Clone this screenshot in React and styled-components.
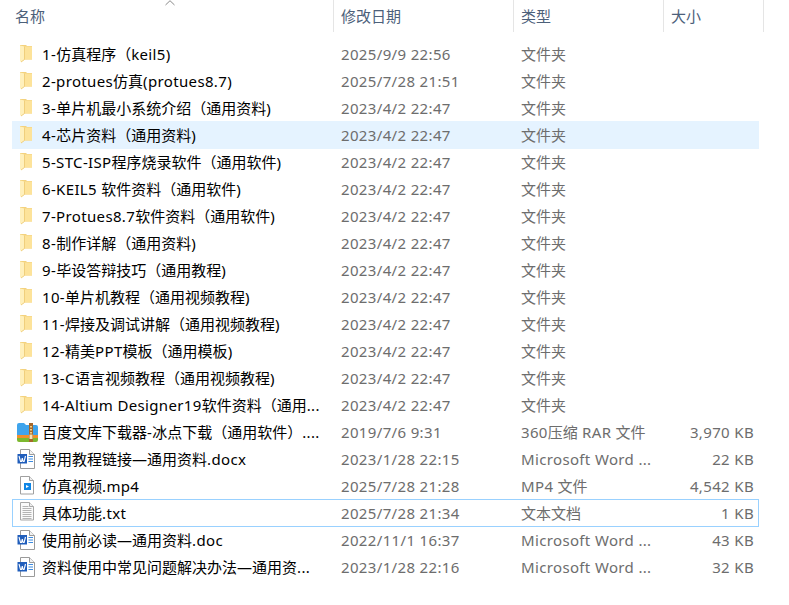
import React from 'react';
import styled, { createGlobalStyle } from 'styled-components';

const GlobalStyle = createGlobalStyle`
  html, body {
    margin: 0;
    background: #fff;
  }
`;

const Page = styled.div`
  width: 789px;
  height: 605px;
  overflow: hidden;
  font: 15px/20px 'Noto Sans', 'Noto Sans CJK SC', sans-serif;
`;

const Columns = styled.div`
  display: grid;
  grid-template-columns: 334px 180px 150px 100px;
`;

const Header = styled(Columns)`
  height: 32px;
  margin-bottom: 8px;
`;

const HeaderCell = styled.div`
  position: relative;
  padding: 6px 0 0 7px;
  color: #4c607a;
  border-right: 1px solid #e5e5e5;

  &:first-child {
    padding-left: 15px;
  }
`;

const SortArrow = styled.svg`
  position: absolute;
  top: 0;
  left: 165px;
`;

const Row = styled(Columns)`
  box-sizing: border-box;
  width: 747px;
  height: 28px;
  margin: 0 0 -1px 12px;
  grid-template-columns: 322px 180px 150px 93px;
  align-items: center;
  border: 1px solid ${(p) => (p.$focus ? '#99d1ff' : 'transparent')};
  background: ${(p) => (p.$hover ? '#e5f3ff' : 'transparent')};
`;

const NameCell = styled.div`
  display: flex;
  align-items: center;
  gap: 6px;
  padding-left: 3px;
  color: #000;
  white-space: nowrap;
`;

const IconBox = styled.span`
  display: flex;
  flex: none;
  width: 20px;
  height: 20px;

  svg {
    overflow: visible;
  }
`;

const DataCell = styled.div`
  padding-left: 6px;
  color: #6d6d6d;
  white-space: nowrap;
  text-align: ${(p) => (p.$right ? 'right' : 'left')};
  padding-right: ${(p) => (p.$right ? '4px' : '0')};
`;

const Latin = styled.span`
  letter-spacing: 0.35px;
`;

// the reference font sets latin wider than Noto Sans, CJK stays at 15px
const Label = ({ text }) =>
  text.split(/([\x20-\x7e]+)/).map((part, i) =>
    i % 2 ? <Latin key={i}>{part}</Latin> : part,
  );

const FolderIcon = () => (
  <svg width="20" height="20" viewBox="0 0 20 20">
    <path d="M4 1h6l1 1h5v13.500H4z" fill="#f3d27e" />
    <path d="M8.500 2.500h7.500v13H8.500z" fill="#fde39a" />
    <path d="M4 1.500l4.500 1v13L5 18l-1-1z" fill="#fff0bc" />
    <path d="M8.500 2.500v13L5 18" fill="none" stroke="#f0cf7c" />
  </svg>
);

const RarIcon = () => (
  <svg width="22" height="22" viewBox="0 0 22 22">
    <path d="M1 3a2 2 0 0 1 2-2h5l2 2h10a2 2 0 0 1 2 2v9H1z" fill="#3fa4ec" />
    <path d="M1 14h21v4a2 2 0 0 1-2 2H3a2 2 0 0 1-2-2z" fill="#7cb82f" />
    <path d="M1 13h21v3H1z" fill="#f0902a" />
    <path d="M13 1h4v19h-4z" fill="#a5682a" />
    <path d="M14 4h2v1.500h-2zM14 7h2v1.500h-2zM14 10h2v1.500h-2z" fill="#f2cf8a" />
    <path d="M13.500 12.500h3v4.500h-3z" fill="#f7e3b5" />
  </svg>
);

const WordIcon = () => (
  <svg width="20" height="20" viewBox="0 0 20 20">
    <path d="M4.500.5h9l5 5v14h-14z" fill="#fff" stroke="#9a9a9a" />
    <path d="M13.500.5v5h5" fill="#f2f2f2" stroke="#9a9a9a" />
    <path d="M1.500 5H11v9.500H1.500z" fill="#1f5dbb" />
    <path d="M3 7l1.500 5.500h1L6.300 9l.8 3.500h1L9.500 7" fill="none" stroke="#fff" strokeWidth="1.100" />
    <path d="M12.500 7.500H17M12.500 10H17M12.500 12.500H17" stroke="#3d8be0" strokeWidth="1.200" />
  </svg>
);

const VideoIcon = () => (
  <svg width="20" height="20" viewBox="0 0 20 20">
    <path d="M4.500.5h9l4 4v13.500h-13z" fill="#fff" stroke="#a0a0a0" />
    <path d="M13.500.5v4h4" fill="#eee" stroke="#a0a0a0" />
    <path d="M8 7h7v7H8z" fill="#0f86e6" />
    <path d="M10 9l3 1.500-3 1.500z" fill="#fff" />
  </svg>
);

const TextIcon = () => (
  <svg width="20" height="20" viewBox="0 0 20 20">
    <path d="M4.500-.5h9l4 4v13.500h-13z" fill="#fafafa" stroke="#a8a8a8" />
    <path d="M13.500-.5v4h4" fill="#eee" stroke="#a8a8a8" />
    <path d="M6.500 3.500h6M6.500 5.500h9M6.500 7.500h9M6.500 9.500h9M6.500 11.500h9M6.500 13.500h9M6.500 15.500h9" stroke="#b4b4b4" />
  </svg>
);

const icons = { folder: FolderIcon, rar: RarIcon, word: WordIcon, video: VideoIcon, text: TextIcon };

const files = [
  ['folder', '1-仿真程序（keil5)', '2025/9/9 22:56', '文件夹', ''],
  ['folder', '2-protues仿真(protues8.7)', '2025/7/28 21:51', '文件夹', ''],
  ['folder', '3-单片机最小系统介绍（通用资料)', '2023/4/2 22:47', '文件夹', ''],
  ['folder', '4-芯片资料（通用资料)', '2023/4/2 22:47', '文件夹', ''],
  ['folder', '5-STC-ISP程序烧录软件（通用软件)', '2023/4/2 22:47', '文件夹', ''],
  ['folder', '6-KEIL5 软件资料（通用软件)', '2023/4/2 22:47', '文件夹', ''],
  ['folder', '7-Protues8.7软件资料（通用软件)', '2023/4/2 22:47', '文件夹', ''],
  ['folder', '8-制作详解（通用资料)', '2023/4/2 22:47', '文件夹', ''],
  ['folder', '9-毕设答辩技巧（通用教程)', '2023/4/2 22:47', '文件夹', ''],
  ['folder', '10-单片机教程（通用视频教程)', '2023/4/2 22:47', '文件夹', ''],
  ['folder', '11-焊接及调试讲解（通用视频教程)', '2023/4/2 22:47', '文件夹', ''],
  ['folder', '12-精美PPT模板（通用模板)', '2023/4/2 22:47', '文件夹', ''],
  ['folder', '13-C语言视频教程（通用视频教程)', '2023/4/2 22:47', '文件夹', ''],
  ['folder', '14-Altium Designer19软件资料（通用...', '2023/4/2 22:47', '文件夹', ''],
  ['rar', '百度文库下载器-冰点下载（通用软件）....', '2019/7/6 9:31', '360压缩 RAR 文件', '3,970 KB'],
  ['word', '常用教程链接—通用资料.docx', '2023/1/28 22:15', 'Microsoft Word ...', '22 KB'],
  ['video', '仿真视频.mp4', '2025/7/28 21:28', 'MP4 文件', '4,542 KB'],
  ['text', '具体功能.txt', '2025/7/28 21:34', '文本文档', '1 KB'],
  ['word', '使用前必读—通用资料.doc', '2022/11/1 16:37', 'Microsoft Word ...', '43 KB'],
  ['word', '资料使用中常见问题解决办法—通用资...', '2023/1/28 22:16', 'Microsoft Word ...', '32 KB'],
];

export default function App() {
  return (
    <Page>
      <GlobalStyle />
      <Header>
        <HeaderCell>
          名称
          <SortArrow width="10" height="6" viewBox="0 0 10 6">
            <path d="M.5 5L5 .7 9.500 5" fill="none" stroke="#8a8a8a" />
          </SortArrow>
        </HeaderCell>
        <HeaderCell>修改日期</HeaderCell>
        <HeaderCell>类型</HeaderCell>
        <HeaderCell>大小</HeaderCell>
      </Header>
      {files.map(([icon, name, date, type, size], i) => {
        const Icon = icons[icon];
        return (
          <Row key={name} $hover={i === 3} $focus={i === 17}>
            <NameCell>
              <IconBox>
                <Icon />
              </IconBox>
              <span>
                <Label text={name} />
              </span>
            </NameCell>
            <DataCell>
              <Label text={date} />
            </DataCell>
            <DataCell>
              <Label text={type} />
            </DataCell>
            <DataCell $right>
              <Label text={size} />
            </DataCell>
          </Row>
        );
      })}
    </Page>
  );
}
